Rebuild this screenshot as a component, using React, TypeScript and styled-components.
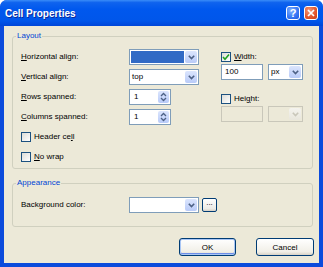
import React from "react";
import styled, { createGlobalStyle } from "styled-components";

const Global = createGlobalStyle`
  html, body { margin: 0; padding: 0; background: #ffffff; }
  body { font-family: "Liberation Sans", Arial, sans-serif; }
`;

const Window = styled.div`
  width: 323px;
  height: 267px;
  display: flex;
  flex-direction: column;
  background: #0b4bdc;
  border-radius: 7px 7px 0 0;
  overflow: hidden;
`;

const TitleBar = styled.div`
  height: 26px;
  flex: none;
  display: flex;
  align-items: center;
  gap: 4px;
  padding: 0 5px 0 5px;
  box-sizing: border-box;
  background: linear-gradient(
    to bottom,
    #3a8cf8 0%,
    #0f63ee 10%,
    #0058ee 35%,
    #0056ea 80%,
    #0046d8 100%
  );
`;

const Title = styled.span`
  flex: 1;
  color: #ffffff;
  font: bold 10px "Liberation Sans", Arial, sans-serif;
  text-shadow: 1px 1px 0 #0a2a9c;
`;

const CaptionButton = styled.div<{ $close?: boolean }>`
  width: 14px;
  height: 14px;
  box-sizing: border-box;
  border: 1px solid #ffffff;
  border-radius: 3px;
  display: flex;
  align-items: center;
  justify-content: center;
  color: #ffffff;
  font: bold 11px "Liberation Sans", Arial, sans-serif;
  background: ${(p) =>
    p.$close
      ? "radial-gradient(circle at 35% 30%, #f29a7d 0%, #e5582f 55%, #c83c13 100%)"
      : "radial-gradient(circle at 35% 30%, #7fb0ff 0%, #3a7af5 55%, #1c56e0 100%)"};
`;

const Frame = styled.div`
  flex: 1;
  display: flex;
  padding: 0 4px 4px 4px;
`;

const Client = styled.div`
  flex: 1;
  display: flex;
  flex-direction: column;
  background: #ece9d8;
  padding: 5px 6px 6px 8px;
  font-size: 8px;
  color: #000000;
`;

const Group = styled.fieldset<{ $top: number; $bottom: number; $gapTop?: number }>`
  margin: ${(p) => p.$gapTop ?? 0}px 0 0 0;
  padding: ${(p) => p.$top}px 8px ${(p) => p.$bottom}px 8px;
  border: 1px solid #d0d0bf;
  border-radius: 3px;
  min-width: 0;
`;

const Legend = styled.legend`
  color: #0046d5;
  font-size: 8px;
  line-height: 10px;
  padding: 0 1px;
  margin-left: -5px;
`;

const LayoutBody = styled.div`
  display: flex;
`;

const LeftCol = styled.div`
  display: flex;
  flex-direction: column;
`;

const FieldGrid = styled.div`
  display: grid;
  grid-template-columns: 108px 70px;
  grid-auto-rows: 16px;
  row-gap: 4px;
  align-items: center;
  margin-bottom: 5px;
`;

const CheckList = styled.div`
  display: flex;
  flex-direction: column;
  gap: 6px;
`;

const Label = styled.span`
  font-size: 8px;
  line-height: 10px;
  white-space: nowrap;
`;

const Key = styled.u`
  text-decoration: underline;
  text-underline-offset: 1px;
`;

const RightCol = styled.div`
  display: flex;
  flex-direction: column;
  margin-left: 22px;
`;

const RightLabelRow = styled.div<{ $mt?: number }>`
  height: 14px;
  margin-top: ${(p) => p.$mt ?? 1}px;
  display: flex;
  align-items: center;
`;

const UnitRow = styled.div`
  display: flex;
  gap: 5px;
`;

const Combo = styled.div<{ $w: number; $disabled?: boolean }>`
  width: ${(p) => p.$w}px;
  height: 16px;
  box-sizing: border-box;
  border: 1px solid ${(p) => (p.$disabled ? "#c9c7ba" : "#7f9db9")};
  background: ${(p) => (p.$disabled ? "#ece9d8" : "#ffffff")};
  display: flex;
  padding: 1px;
  gap: 1px;
`;

const ComboText = styled.div<{ $selected?: boolean }>`
  flex: 1;
  font-size: 8px;
  line-height: 12px;
  padding-left: 1px;
  background: ${(p) => (p.$selected ? "#316ac5" : "transparent")};
  color: ${(p) => (p.$selected ? "#ffffff" : "#000000")};
`;

const ArrowButton = styled.div<{ $disabled?: boolean }>`
  width: 12px;
  flex: none;
  border-radius: 2px;
  display: flex;
  align-items: center;
  justify-content: center;
  background: ${(p) =>
    p.$disabled
      ? "linear-gradient(#f4f3ee, #e8e6dc)"
      : "linear-gradient(#dbe5fd, #b9cbf8)"};
`;

const TextBox = styled.div<{ $w: number; $disabled?: boolean }>`
  width: ${(p) => p.$w}px;
  height: 16px;
  box-sizing: border-box;
  border: 1px solid ${(p) => (p.$disabled ? "#c9c7ba" : "#7f9db9")};
  background: ${(p) => (p.$disabled ? "#ece9d8" : "#ffffff")};
  font-size: 8px;
  line-height: 14px;
  padding-left: 3px;
`;

const Spinner = styled.div`
  width: 42px;
  height: 16px;
  box-sizing: border-box;
  border: 1px solid #7f9db9;
  background: #ffffff;
  display: flex;
  padding: 1px;
`;

const SpinText = styled.div`
  flex: 1;
  font-size: 8px;
  line-height: 12px;
  padding-left: 3px;
`;

const SpinButtons = styled.div`
  width: 11px;
  display: flex;
  flex-direction: column;
  border-radius: 2px;
  background: linear-gradient(#dbe5fd, #b9cbf8);
  align-items: center;
  justify-content: center;
`;

const CheckRow = styled.label`
  display: flex;
  align-items: center;
  gap: 3px;
  height: 14px;
`;

const Box = styled.span`
  width: 10px;
  height: 10px;
  box-sizing: border-box;
  border: 1px solid #1c5180;
  background: linear-gradient(135deg, #dcdcd7, #ffffff);
  display: flex;
  align-items: center;
  justify-content: center;
`;

const AppearanceRow = styled.div`
  display: flex;
  align-items: center;
  height: 16px;
`;

const AppearanceLabel = styled.span`
  width: 108px;
  font-size: 8px;
  line-height: 10px;
`;

const MiniButton = styled.div`
  width: 15px;
  height: 14px;
  margin-left: 3px;
  box-sizing: border-box;
  border: 1px solid #003c74;
  border-radius: 2px;
  background: linear-gradient(#ffffff, #ecebe6 80%, #d6d0c5);
  font-size: 8px;
  line-height: 8px;
  text-align: center;
`;

const ButtonRow = styled.div`
  display: flex;
  justify-content: flex-end;
  gap: 20px;
  margin-top: 11px;
  margin-right: -1px;
`;

const PushButton = styled.button<{ $w: number; $default?: boolean }>`
  width: ${(p) => p.$w}px;
  height: 18px;
  padding: 0;
  box-sizing: border-box;
  border: 1px solid #003c74;
  border-radius: 3px;
  background: linear-gradient(#ffffff, #f1efe7 80%, #d8d2c6);
  font: 8px "Liberation Sans", Arial, sans-serif;
  color: #000000;
  box-shadow: ${(p) =>
    p.$default ? "inset 0 0 0 1px #a9c6f5, inset 0 -1px 0 1px #6d8ee8" : "none"};
`;

const Chevron = ({ color = "#4d6185" }: { color?: string }) => (
  <svg width="7" height="5" viewBox="0 0 7 5">
    <path d="M0.8 0.8 L3.5 3.6 L6.2 0.8" stroke={color} strokeWidth="1.6" fill="none" />
  </svg>
);

const SpinArrows = () => (
  <svg width="7" height="10" viewBox="0 0 7 10">
    <path d="M1 4 L3.5 1.5 L6 4" stroke="#4d6185" strokeWidth="1.3" fill="none" />
    <path d="M1 6 L3.5 8.5 L6 6" stroke="#4d6185" strokeWidth="1.3" fill="none" />
  </svg>
);

const Check = () => (
  <svg width="8" height="8" viewBox="0 0 8 8">
    <path d="M1 4 L3 6.2 L7 1.5" stroke="#21a121" strokeWidth="1.6" fill="none" />
  </svg>
);

const CloseGlyph = () => (
  <svg width="8" height="8" viewBox="0 0 8 8">
    <path d="M1 1 L7 7 M7 1 L1 7" stroke="#ffffff" strokeWidth="1.7" />
  </svg>
);

export default function App() {
  return (
    <>
      <Global />
      <Window>
        <TitleBar>
          <Title>Cell Properties</Title>
          <CaptionButton>?</CaptionButton>
          <CaptionButton $close>
            <CloseGlyph />
          </CaptionButton>
        </TitleBar>
        <Frame>
          <Client>
            <Group $top={8} $bottom={4}>
              <Legend>Layout</Legend>
              <LayoutBody>
                <LeftCol>
                  <FieldGrid>
                    <Label>
                      <Key>H</Key>orizontal align:
                    </Label>
                    <Combo $w={70}>
                      <ComboText $selected />
                      <ArrowButton>
                        <Chevron />
                      </ArrowButton>
                    </Combo>
                    <Label>
                      <Key>V</Key>ertical align:
                    </Label>
                    <Combo $w={70}>
                      <ComboText>top</ComboText>
                      <ArrowButton>
                        <Chevron />
                      </ArrowButton>
                    </Combo>
                    <Label>
                      <Key>R</Key>ows spanned:
                    </Label>
                    <Spinner>
                      <SpinText>1</SpinText>
                      <SpinButtons>
                        <SpinArrows />
                      </SpinButtons>
                    </Spinner>
                    <Label>
                      <Key>C</Key>olumns spanned:
                    </Label>
                    <Spinner>
                      <SpinText>1</SpinText>
                      <SpinButtons>
                        <SpinArrows />
                      </SpinButtons>
                    </Spinner>
                  </FieldGrid>
                  <CheckList>
                    <CheckRow>
                      <Box />
                      <Label>
                        Header ce<Key>l</Key>l
                      </Label>
                    </CheckRow>
                    <CheckRow>
                      <Box />
                      <Label>
                        <Key>N</Key>o wrap
                      </Label>
                    </CheckRow>
                  </CheckList>
                </LeftCol>
                <RightCol>
                  <RightLabelRow>
                    <CheckRow>
                      <Box>
                        <Check />
                      </Box>
                      <Label>
                        <Key>W</Key>idth:
                      </Label>
                    </CheckRow>
                  </RightLabelRow>
                  <UnitRow>
                    <TextBox $w={42}>100</TextBox>
                    <Combo $w={35}>
                      <ComboText>px</ComboText>
                      <ArrowButton>
                        <Chevron />
                      </ArrowButton>
                    </Combo>
                  </UnitRow>
                  <RightLabelRow $mt={12}>
                    <CheckRow>
                      <Box />
                      <Label>
                        Hei<Key>g</Key>ht:
                      </Label>
                    </CheckRow>
                  </RightLabelRow>
                  <UnitRow>
                    <TextBox $w={42} $disabled />
                    <Combo $w={35} $disabled>
                      <ComboText />
                      <ArrowButton $disabled>
                        <Chevron color="#c9c7ba" />
                      </ArrowButton>
                    </Combo>
                  </UnitRow>
                </RightCol>
              </LayoutBody>
            </Group>
            <Group $top={9} $bottom={13} $gapTop={9}>
              <Legend>Appearance</Legend>
              <AppearanceRow>
                <AppearanceLabel>Background color:</AppearanceLabel>
                <Combo $w={70}>
                  <ComboText />
                  <ArrowButton>
                    <Chevron />
                  </ArrowButton>
                </Combo>
                <MiniButton>...</MiniButton>
              </AppearanceRow>
            </Group>
            <ButtonRow>
              <PushButton $w={57} $default>
                OK
              </PushButton>
              <PushButton $w={58}>Cancel</PushButton>
            </ButtonRow>
          </Client>
        </Frame>
      </Window>
    </>
  );
}
